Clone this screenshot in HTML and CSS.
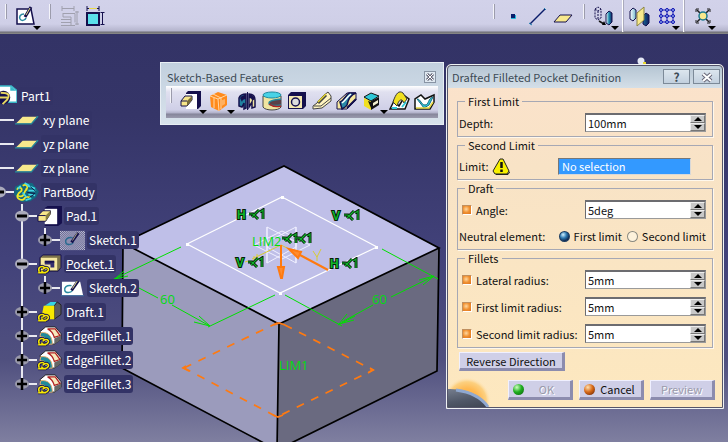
FILE: index.html
```html
<!DOCTYPE html>
<html lang="en">
<head>
<meta charset="utf-8">
<title>Part1</title>
<link rel="stylesheet" href="styles.css">
</head>
<body>
<svg class="defs" aria-hidden="true">
  <defs>
    <symbol id="i-pad" viewBox="0 0 22 22"><path d="M6 3l2-2h13v15l-3 3H6z" fill="#15104d"/><path d="M6 4h11v15H6z" fill="#fff"/><path d="M1 11l4-5h7v4l-5 6H1z" fill="#f7e68a" stroke="#15104d"/><path d="M7 11l5-5v4l-5 6z" fill="#776c38"/><path d="M1 11h6" stroke="#15104d"/></symbol>
    <symbol id="i-pad-wide" viewBox="0 0 26 24"><path d="M8 3l3-2h15v18l-4 3H8z" fill="#15104d"/><path d="M8 4h13v16H8z" fill="#fff"/><path d="M1 11l5-5h8v3l-5 8H1z" fill="#f7e68a" stroke="#15104d"/><path d="M9 11l5-5v4l-5 7z" fill="#8a8040"/><path d="M1 11h8" stroke="#15104d"/></symbol>
    <symbol id="i-pocket" viewBox="0 0 26 24"><path d="M3 5l3-3h19v13l-3 4H3z" fill="#7d744a" stroke="#15104d"/><path d="M4 5h17v13H4z" fill="#f7e9a0"/><path d="M8 9h10v6h-4v-3H8z" fill="#332d6e"/><path d="M8 9h10" stroke="#15104d" stroke-width="2"/></symbol>
    <symbol id="i-plane" viewBox="0 0 26 12"><path d="M9 2h15l-6 7H2z" fill="#f8e98c"/><path d="M1 9.500h17l7-8" fill="none" stroke="#258a9a" stroke-width="1.500"/></symbol>
    <symbol id="i-sketch" viewBox="0 0 26 20"><path d="M2 3h19l3 14H2z" fill="#fff"/><path d="M1 17.500h24" stroke="#3c6ea0"/><path d="M12 7c-5-1-8 2-7 5s6 3 8 0" fill="none" stroke="#2a8aa0" stroke-width="1.500"/><path d="M12 12l7-10" stroke="#15104d" stroke-width="3"/><path d="M13 10l5-8" stroke="#e8e08a"/></symbol>
    <pattern id="p-dither" width="2" height="2" patternUnits="userSpaceOnUse"><path d="M0 0h1v1H0zM1 1h1v1H1z" fill="#d8d8e4"/></pattern>
    <symbol id="i-sketch-hidden" viewBox="0 0 26 20"><path d="M0 0h26v20H0z" fill="url(#p-dither)"/><path d="M13 7c-5-1-8 2-7 5s6 3 8 0" fill="none" stroke="#2a6a90" stroke-width="1.500"/><path d="M12 12l7-10" stroke="#15104d" stroke-width="3"/><path d="M13 10l5-8" stroke="#a8a880"/></symbol>
    <symbol id="i-chain" viewBox="0 0 12 10"><path d="M2 7c-2-4 3-6 5-3M5 5c3-3 6-1 5 1S5 9 4 6M1 8h7" fill="none" stroke="#15104d" stroke-width="3"/><path d="M2 7c-2-4 3-6 5-3M5 5c3-3 6-1 5 1S5 9 4 6M1 8h7" fill="none" stroke="#f7e900" stroke-width="1.400"/></symbol>
    <symbol id="i-fillet" viewBox="0 0 26 24"><path d="M3 7l6-5h10l6 7v6l-7 5-9-1z" fill="#fff" stroke="#222"/><path d="M11 4h8l5 7-6 2c-1-4-3-7-7-9z" fill="#f6e9bd" stroke="#b02020" stroke-width="1.300"/><path d="M18 14l7-3v4l-7 5z" fill="#666"/><path d="M4 8c8-1 12 4 12 12h-4C11 15 8 12 3 12z" fill="#208a9a" stroke="#e8b070"/><use href="#i-chain" x="0" y="11" width="14" height="12"/></symbol>
    <symbol id="i-draft" viewBox="0 0 26 24"><path d="M8 5l6-4h8l-4 4z" fill="#35d5e5"/><path d="M21 1l4 3v10l-7 5V5z" fill="#5a5a60" stroke="#222"/><path d="M7 5h11v14H4z" fill="#f7e900"/><use href="#i-chain" x="0" y="11" width="14" height="12"/></symbol>
    <symbol id="i-plus" viewBox="0 0 14 14"><ellipse cx="7" cy="7" rx="7" ry="5" fill="#99a"/><path d="M2 7h10M7 1v12" stroke="#000" stroke-width="2.500"/></symbol>
    <symbol id="i-minus" viewBox="0 0 14 14"><ellipse cx="7" cy="7" rx="7" ry="5.500" fill="#aab"/><path d="M2 7h10" stroke="#000" stroke-width="3"/></symbol>
    <symbol id="i-coin" viewBox="-2 -1 18 14"><path d="M0 5h4l5 5M3 8l7-7M11 3l3-2v9" fill="none" stroke="#061c06" stroke-width="3"/><path d="M0 5h4l5 5M3 8l7-7M11 3l3-2v9" fill="none" stroke="#0fb52b" stroke-width="1.200"/></symbol>
    <linearGradient id="g-solid" x2="1"><stop stop-color="#fff"/><stop offset=".5" stop-color="#1f8fb0"/><stop offset="1" stop-color="#102060"/></linearGradient>
    <radialGradient id="g-sun"><stop offset=".5" stop-color="#ffb850"/><stop offset=".8" stop-color="#fcd080"/><stop offset="1" stop-color="#ffe8c0" stop-opacity="0"/></radialGradient>
    <linearGradient id="g-earth" x2=".3" y2="1"><stop stop-color="#8890a0"/><stop offset=".4" stop-color="#505868"/><stop offset="1" stop-color="#20242c"/></linearGradient>
  </defs>
</svg>

<header class="toolbar">
  <span class="grip"></span>
  <button class="tool drop" aria-label="Sketch"><svg viewBox="0 0 22 22"><path d="M2 4h14l3 15H2z" fill="#fff" stroke="#15104d" stroke-width="1.500"/><path d="M9 9c-4 0-5 3-4 5s5 2 6-1" fill="none" stroke="#2a8aa0" stroke-width="1.500"/><path d="M10 12l6-10" stroke="#15104d" stroke-width="3"/><path d="M11 10l4-7" stroke="#e8e08a"/></svg></button>
  <span class="grip"></span>
  <button class="tool" aria-label="Constraints dialog"><svg viewBox="0 0 22 22" fill="none" stroke="#a0a0ae"><path d="M3 1v5M15 1v5M3 3.500h12M4 8.500h12v9M4 8v4h8v8M2 14.500h10M2 17.500h10M2 20.500h14M18 6v14M16 7h4M16 19h4"/></svg></button>
  <button class="tool" aria-label="Constraint"><svg viewBox="0 0 22 22"><path d="M3 8h12v12H3z" fill="#5be0ea" stroke="#15104d" stroke-width="2"/><path d="M3 1v5M15 1v5M3 3.500h12" stroke="#15104d" fill="none"/><path d="M5 3.500h8" stroke="#e8d84a"/><path d="M18.500 7v13M16.500 7.500h4M16.500 19.500h4" stroke="#15104d"/></svg></button>
  <span class="spacer"></span>
  <span class="grip"></span>
  <button class="tool" aria-label="Point"><svg viewBox="0 0 22 22"><path d="M8 9h4v4H8z" fill="#0a1c6a"/><path d="M8 13.500h4.500V10" fill="none" stroke="#20b8d8"/></svg></button>
  <button class="tool" aria-label="Line"><svg viewBox="0 0 22 22"><path d="M2 19L17 4" stroke="#0a1c6a" stroke-width="1.500"/><path d="M1 18l3 2M16 3l2 2" stroke="#2080b0"/></svg></button>
  <button class="tool" aria-label="Plane"><svg viewBox="0 0 22 22"><path d="M7 10h12l-6 7H1z" fill="#f8e98c" stroke="#15104d"/></svg></button>
  <span class="grip"></span>
  <button class="tool drop" aria-label="Translation"><svg viewBox="0 0 22 22"><path d="M2 4l3-2 3 2v9l-3 2-3-2zM2 4l3 2 3-2M5 6v9" fill="none" stroke="#15104d" stroke-dasharray="2 1"/><path d="M6 16l5 3" stroke="#111" stroke-width="1.500"/><path d="M9 20l4 0-2-4z"/><path d="M13 9l3-3 3 2v9l-3 3-3-2z" fill="url(#g-solid)" stroke="#15104d"/></svg></button>
  <span class="rule"></span>
  <button class="tool" aria-label="Mirror"><svg viewBox="0 0 22 22"><path d="M1 6l3-3 3 2v8l-3 3-3-2zM14 11l3-3 3 2v8l-3 3-3-2z" fill="url(#g-solid)" stroke="#15104d"/><path d="M8 8l7-6v13l-7 6z" fill="#f8e98c" stroke="#8a8440"/></svg></button>
  <button class="tool drop" aria-label="Rectangular pattern"><svg viewBox="0 0 22 22"><path d="M7 3v16M13 3v16M19 3v16M5 5h16M5 11h16M5 17h16" stroke="#1414b4"/><g fill="#88a8e8" stroke="#1414b4"><circle cx="7" cy="5" r="1.500"/><circle cx="13" cy="5" r="1.500"/><circle cx="19" cy="5" r="1.500"/><circle cx="7" cy="11" r="1.500"/><circle cx="13" cy="11" r="1.500"/><circle cx="19" cy="11" r="1.500"/><circle cx="7" cy="17" r="1.500"/><circle cx="13" cy="17" r="1.500"/><circle cx="19" cy="17" r="1.500"/></g></svg></button>
  <span class="rule"></span>
  <button class="tool drop" aria-label="Scaling"><svg viewBox="0 0 22 22"><path d="M7 5l12 12M19 5L7 17" stroke="#222" stroke-width="1.500"/><path d="M6 7V4h3M17 4h3v3M6 15v3h3M17 18h3v-3" fill="none" stroke="#222"/><circle cx="13" cy="11" r="4" fill="#f8e98c" stroke="#1c7a90" stroke-width="1.500"/></svg></button>
</header>

<main class="workspace">
  <svg class="scene" viewBox="0 34 728 408" preserveAspectRatio="xMinYMin meet" role="img" aria-label="Part geometry">
    <path d="M123 243L279 324L277 450L122 368z" fill="#9b9bbc"/>
    <path d="M279 324L439 248L437 371L277 450z" fill="#6a6a80"/>
    <path d="M284 166L439 248L279 324L123 243z" fill="#bfbfe8"/>
    <path d="M123 243L284 166L439 248L279 324zM123 243L122 368L277 450L437 371L439 248M279 324L277 450" class="edge"/>
    <path d="M282 197L377 247L280 293L187 244z" class="profile"/>
    <path d="M267 227l29 15v21l-29-16zM296 227l-29 15v21l29-16zM254 245l28-14 28 14-28 14zM267 227v36M296 227v36" class="axes"/>
    <path d="M281 196h3v3h-3zM375 246h3v3h-3zM279 292h3v3h-3zM186 243h3v3h-3z" fill="#fff"/>
    <path d="M281 245L252 259M248 261l-3 1M254 256l0 5M257 254l0 4M281 245l10 5M313 251l4 6 4-8M317 257v4" class="axis"/>
    <g class="dim">
      <path d="M181 247L114 279M115 279l13-3M115 279l9-8M139 288L158 298M172 305L208 325M210 326L194 322M210 326L199 316M208 327L275 295M285 295L342 326M373 305L342 322M338 325L355 316M339 324L347 314M339 324L354 320M391 297L432 277M434 276L419 280M434 276L423 285M382 249L438 279"/>
    </g>
    <g class="measure">
      <text x="160" y="304">60</text><text x="372" y="304">60</text>
      <text x="252" y="246">LIM2</text><text x="279" y="370">LIM1</text>
    </g>
    <path d="M184 368L279 322L373 370L277 417z" class="limit"/>
    <path d="M274 325l5-2 6 2M273 415l5 2 5-2M186 366l-3 2 6 3M370 368l3 2-5 3" class="limit-tip"/>
    <path d="M281 245V270M328 270L300 255" class="arrow"/>
    <path d="M278 267h6l-2 11h-1zM289 249l12 3-3 6z" class="arrow-head"/>
    <g class="hv">
      <text x="237" y="219">H</text><text x="332" y="220">V</text><text x="236" y="267">V</text><text x="330" y="268">H</text>
    </g>
    <use href="#i-coin" x="247" y="208" width="18" height="14"/>
    <use href="#i-coin" x="342" y="209" width="18" height="14"/>
    <use href="#i-coin" x="246" y="256" width="18" height="14"/>
    <use href="#i-coin" x="340" y="257" width="18" height="14"/>
    <use href="#i-coin" x="280" y="232" width="18" height="14"/>
    <use href="#i-coin" x="294" y="232" width="18" height="14"/>
    <circle cx="641" cy="61" r="3.500" fill="#e4e8f4"/><path d="M643 62h3v2h-3z" fill="#e8d830"/>
  </svg>

  <nav class="tree" aria-label="Specification tree">
    <div class="row root"><svg class="icon" viewBox="0 0 26 24"><path d="M4 1h16l6 5v12H4z" fill="#fff" stroke="#38b8c8" stroke-width="1.500"/><path d="M19 1v5h6z" fill="#38b8c8"/><circle cx="12" cy="13" r="7" fill="#15104d"/><path d="M9 8c8 0 10 2 7 7l-5 5M8 13h8" stroke="#e8d860" stroke-width="2" fill="none"/></svg><span class="label">Part1</span></div>
    <ul class="branch">
      <li><div class="row"><span class="lead"></span><svg class="icon"><use href="#i-plane"/></svg><span class="label">xy plane</span></div></li>
      <li><div class="row"><span class="lead"></span><svg class="icon"><use href="#i-plane"/></svg><span class="label">yz plane</span></div></li>
      <li><div class="row"><span class="lead"></span><svg class="icon"><use href="#i-plane"/></svg><span class="label">zx plane</span></div></li>
      <li><div class="row"><svg class="knob"><use href="#i-minus"/></svg><svg class="icon" viewBox="0 0 26 24"><path d="M0 14L1 6 9 2l10 0 3 4 4 5-3 6-6 4-9 1-5-4z" fill="#126a82"/><path d="M3 9c3-5 7 0 4 2s-5 5 0 5 3-8 7-7M9 5c4-3 7 2 3 4M4 14c-3 4 5 8 7 4s5 1 6-2" fill="none" stroke="#f2e628" stroke-width="1.800"/><path d="M14 5l8 3M15 10h8M15 14l7 1M11 2l5 3M7 5l-3 3M12 20l6-2M9 12l4 5" stroke="#43d9e6" stroke-width="1.800"/><path d="M17 6l6 5M14 12l8 1M16 17l5-3" stroke="#101040"/></svg><span class="label">PartBody</span></div>
        <ul class="branch lined">
          <li><div class="row"><svg class="knob"><use href="#i-minus"/></svg><svg class="icon"><use href="#i-pad-wide"/></svg><span class="label">Pad.1</span></div>
            <ul class="branch stub"><li><div class="row"><svg class="knob"><use href="#i-plus"/></svg><svg class="icon"><use href="#i-sketch-hidden"/></svg><span class="label">Sketch.1</span></div></li></ul></li>
          <li><div class="row"><svg class="knob"><use href="#i-minus"/></svg><svg class="icon" viewBox="0 0 26 24"><use href="#i-pocket"/><use href="#i-chain" x="0" y="11" width="14" height="12"/></svg><span class="label current">Pocket.1</span></div>
            <ul class="branch stub"><li><div class="row"><svg class="knob"><use href="#i-plus"/></svg><svg class="icon"><use href="#i-sketch"/></svg><span class="label">Sketch.2</span></div></li></ul></li>
          <li><div class="row"><svg class="knob"><use href="#i-plus"/></svg><svg class="icon"><use href="#i-draft"/></svg><span class="label">Draft.1</span></div></li>
          <li><div class="row"><svg class="knob"><use href="#i-plus"/></svg><svg class="icon"><use href="#i-fillet"/></svg><span class="label">EdgeFillet.1</span></div></li>
          <li><div class="row"><svg class="knob"><use href="#i-plus"/></svg><svg class="icon"><use href="#i-fillet"/></svg><span class="label">EdgeFillet.2</span></div></li>
          <li><div class="row"><svg class="knob"><use href="#i-plus"/></svg><svg class="icon"><use href="#i-fillet"/></svg><span class="label">EdgeFillet.3</span></div></li>
        </ul></li>
    </ul>
  </nav>

  <section class="palette" aria-label="Sketch-Based Features">
    <div class="caption"><h2>Sketch-Based Features</h2><button class="close" aria-label="Close palette"><svg viewBox="0 0 10 10"><path d="M2 2l6 6M8 2L2 8" stroke="#667" stroke-width="3"/><path d="M2 2l6 6M8 2L2 8" stroke="#fff"/></svg></button></div>
    <div class="palette-bar">
      <span class="grip"></span>
      <button class="tool drop" aria-label="Pad"><svg><use href="#i-pad"/></svg></button>
      <button class="tool drop" aria-label="Pocket"><svg viewBox="0 0 22 22"><path d="M2 6l8-4 9 3v10l-8 6-8-4z" fill="#ff8a1c"/><path d="M2 6l8 3 9-4M10 9l1 12M5 4l8 4v11M6 8v10" fill="none" stroke="#ffd8a8"/><path d="M12 11l5-2v5l-5 3z" fill="#ffb060"/></svg></button>
      <button class="tool" aria-label="Shaft"><svg viewBox="0 0 22 22"><path d="M3 8c1-3 4-4 7-4v14l-2 1v-6l-2 4-3-1z" fill="#2080a0" stroke="#15104d" stroke-width="1.500"/><path d="M13 4c4 0 6 2 6 6v7l-3 1v-6l-3 5z" fill="#f0e4a0" stroke="#15104d" stroke-width="1.500"/><path d="M4 8c2-3 4-3 6-3v4c-2 0-4 1-4 3M13 4c3 0 5 2 6 5l-3 2c0-2-1-3-3-3z" fill="#15104d"/><path d="M11.500 2v18" stroke="#15104d"/></svg></button>
      <button class="tool" aria-label="Groove"><svg viewBox="0 0 22 22"><path d="M2 6v11c2 4 16 4 18 0V6z" fill="#f0e4a0" stroke="#444"/><path d="M20 9c-5 1-12 1-12 4s6 3 12 2" fill="#5a4048" stroke="#208aa0" stroke-width="1.500"/><path d="M8 14c4 3 8 3 12 2" stroke="#b02020" fill="none" stroke-width="1.500"/><ellipse cx="11" cy="5" rx="9" ry="3" fill="#48d2e6" stroke="#208aa0"/></svg></button>
      <button class="tool" aria-label="Hole"><svg viewBox="0 0 22 22"><path d="M2 5l3-3h15v14l-3 3H2z" fill="#15104d"/><path d="M3 6h13v12H3z" fill="#f4e8b0"/><circle cx="9.500" cy="12" r="4" fill="#ddd" stroke="#15104d" stroke-width="1.500"/></svg></button>
      <button class="tool" aria-label="Rib"><svg viewBox="0 0 22 22"><path d="M2 16l4-3 6-7 5-4 3 4v5l-9 7-9 1z" fill="#fff4c0" stroke="#444"/><path d="M3 16h7l10-8" fill="none" stroke="#444"/><path d="M7 13l8-8" stroke="#444" stroke-width="3"/><path d="M7 12l8-8" stroke="#e8d830" stroke-width="1.500"/></svg></button>
      <button class="tool" aria-label="Slot"><svg viewBox="0 0 22 22"><path d="M1 12l10-9h9v7l-9 9H1z" fill="#f7e9a0" stroke="#15104d"/><path d="M4 12c4-1 5-6 9-9h7c-6 2-8 7-9 12-1 2-3 3-5 4z" fill="#2a8aa8" stroke="#15104d" stroke-width="1.500"/><path d="M6 13c3-2 5-6 9-9" stroke="#fff" stroke-width="1.500" fill="none"/><path d="M11 18l9-9" stroke="#15104d" stroke-width="2"/></svg></button>
      <button class="tool drop" aria-label="Stiffener"><svg viewBox="0 0 22 22"><path d="M3 8l7 3v9l-7-4z" fill="#f0e020"/><path d="M10 11l8-4v8l-8 5z" fill="#111"/><path d="M3 7l7-4 8 3-8 5z" fill="#30c8d8" stroke="#111"/><path d="M7 11l3 1v6z" fill="#111"/><path d="M12 13l5-3v3l-5 3z" fill="#f4f0d0"/></svg></button>
      <button class="tool" aria-label="Multi-sections solid"><svg viewBox="0 0 22 22"><path d="M1 19l4-8 5 5 6-10 4 3-4 10z" fill="#fff" stroke="#111" stroke-width="1.500"/><path d="M4 12c3-9 6-12 10-9l4 6-3 4c-2-5-5-4-7 3z" fill="#f0e020" stroke="#333"/><path d="M3 18h5M13 17l4-5" stroke="#30c8d8" stroke-width="2"/></svg></button>
      <button class="tool" aria-label="Removed multi-sections solid"><svg viewBox="0 0 22 22"><path d="M1 19V9l6-4 4 4 9-4v7l-4 7z" fill="#fff" stroke="#111" stroke-width="1.500"/><path d="M3 9c4 0 4 6 8 6s3-7 8-8l-4 8-5 3z" fill="#30c8d8" stroke="#186a80"/><path d="M2 18h13l4-6" stroke="#e8d840" stroke-width="1.500" fill="none"/></svg></button>
    </div>
  </section>

  <form class="dialog" aria-labelledby="dlg-title">
    <div class="titlebar">
      <h2 id="dlg-title">Drafted Filleted Pocket Definition</h2>
      <button type="button" class="win" aria-label="Help">?</button>
      <button type="button" class="win" aria-label="Close"><svg viewBox="0 0 12 12"><path d="M2 3l8 7M10 3L2 10" stroke="#667" stroke-width="4"/><path d="M2 3l8 7M10 3L2 10" stroke="#fff" stroke-width="2"/></svg></button>
    </div>
    <div class="body">
      <fieldset><legend>First Limit</legend>
        <div class="field"><label for="depth">Depth:</label><span class="spin"><input id="depth" type="text" value="100mm"><span class="steps"><button type="button" aria-label="Increase depth"></button><button type="button" aria-label="Decrease depth"></button></span></span></div>
      </fieldset>
      <fieldset><legend>Second Limit</legend>
        <div class="field"><label for="limit">Limit:</label><svg class="warn" viewBox="0 0 18 18"><path d="M8 2h3l6 12-2 3H3l-2-3z" fill="#f8f000" stroke="#222"/><path d="M4 17.500h12l2-3" fill="none" stroke="#222"/><path d="M9.500 5v6M9.500 12.500v2.500" stroke="#111" stroke-width="2.500"/></svg><input id="limit" class="selection" type="text" value="No selection" readonly></div>
      </fieldset>
      <fieldset><legend>Draft</legend>
        <div class="field"><input type="checkbox" id="c-angle" checked><label for="c-angle">Angle:</label><span class="spin"><input type="text" value="5deg" aria-label="Angle"><span class="steps"><button type="button" aria-label="Increase angle"></button><button type="button" aria-label="Decrease angle"></button></span></span></div>
        <div class="field"><span class="neutral">Neutral element:</span><input type="radio" name="neutral" id="n1" checked><label for="n1">First limit</label><input type="radio" name="neutral" id="n2"><label for="n2">Second limit</label></div>
      </fieldset>
      <fieldset><legend>Fillets</legend>
        <div class="field"><input type="checkbox" id="c-lat" checked><label for="c-lat">Lateral radius:</label><span class="spin"><input type="text" value="5mm" aria-label="Lateral radius"><span class="steps"><button type="button" aria-label="Increase lateral radius"></button><button type="button" aria-label="Decrease lateral radius"></button></span></span></div>
        <div class="field"><input type="checkbox" id="c-first" checked><label for="c-first">First limit radius:</label><span class="spin"><input type="text" value="5mm" aria-label="First limit radius"><span class="steps"><button type="button" aria-label="Increase first limit radius"></button><button type="button" aria-label="Decrease first limit radius"></button></span></span></div>
        <div class="field"><input type="checkbox" id="c-second" checked><label for="c-second">Second limit radius:</label><span class="spin"><input type="text" value="5mm" aria-label="Second limit radius"><span class="steps"><button type="button" aria-label="Increase second limit radius"></button><button type="button" aria-label="Decrease second limit radius"></button></span></span></div>
      </fieldset>
      <button type="button" class="push reverse">Reverse Direction</button>
      <div class="actions">
        <button type="submit" class="push action" disabled><span class="ball green"></span><span>OK</span></button>
        <button type="button" class="push action"><span class="ball orange"></span><span>Cancel</span></button>
        <button type="button" class="push action" disabled>Preview</button>
      </div>
    </div>
    <svg class="sunrise" viewBox="0 0 44 31" aria-hidden="true"><circle cx="19" cy="25" r="24" fill="url(#g-sun)"/><ellipse cx="2" cy="37" rx="39" ry="24" fill="url(#g-earth)"/><path d="M8 14c14 2 26 8 32 17" fill="none" stroke="#8fa8d0" stroke-width="3"/></svg>
  </form>
</main>
</body>
</html>
```
FILE: styles.css
```css
* { box-sizing: border-box; }

body {
  margin: 0;
  min-height: 100vh;
  display: flex;
  flex-direction: column;
  overflow-x: hidden;
  font: 11px/14px "Noto Sans CJK KR", "Noto Sans", sans-serif;
  color: #111;
}

button, input { font: inherit; color: inherit; }
button { padding: 0; border: 0; background: none; }
h2 { margin: 0; font: inherit; }
.defs { position: absolute; width: 0; height: 0; }

/* Toolbars */
.toolbar {
  display: flex;
  align-items: center;
  gap: 3px;
  height: 34px;
  padding: 2px 12px 4px 0;
  background: linear-gradient(#d2d2ea 0, #cfcfe7 24px, #b4b4cc 31px, #6f6f77 32px, #8c8c88 34px);
}

.grip {
  width: 2px;
  height: 15px;
  margin: 2px 5px 0;
  align-self: flex-start;
  background: linear-gradient(90deg, #f4f4fa 50%, #9c9cac 50%);
}

.rule { width: 2px; align-self: stretch; margin: -2px 2px -2px 0; background: linear-gradient(90deg, #fff 50%, #aaaabc 50%); }
.spacer { flex: 1; }
.tool { position: relative; flex: none; width: 22px; height: 22px; }
.toolbar .drop { width: 26px; }
.tool svg { display: block; width: 22px; height: 22px; }

.drop::after {
  content: "";
  position: absolute;
  right: 0;
  bottom: -3px;
  border: solid transparent;
  border-width: 4px 4px 0;
  border-top-color: #000;
}

.palette .drop::after { right: -5px; bottom: -2px; }

/* Workspace */
.workspace {
  position: relative;
  flex: 1;
  overflow: hidden;
  background: linear-gradient(#333366 0, #353568 20%, #42427a 55%, #50507f 80%, #7f7fa0 100%);
}

.scene { position: absolute; inset: 0; width: 100%; height: 100%; }
.edge { fill: none; stroke: #000; stroke-width: 1.7; }
.profile { fill: none; stroke: #fff; stroke-width: 1.2; }
.axes { fill: none; stroke: #f0f0ff; stroke-width: 1; }
.axis { fill: none; stroke: #d8cc30; }
.dim { fill: none; stroke: #00e000; }
.measure { fill: #00dc10; font: 13px "Open Sans", sans-serif; }
.limit { fill: none; stroke: #ff7a10; stroke-width: 1.7; stroke-dasharray: 8 8; }
.limit-tip { fill: none; stroke: #ff7a10; stroke-width: 1.7; }
.arrow { stroke: #ff7a10; stroke-width: 2; }
.arrow-head { fill: #ff8c30; stroke: #ff7a10; stroke-width: 2; }
.hv { fill: #0fb52b; stroke: #061c06; stroke-width: 2; paint-order: stroke; font: bold 12px "Liberation Sans", sans-serif; }

/* Specification tree */
.tree {
  position: relative;
  width: 150px;
  margin-left: -8px;
  padding-top: 50px;
  font-size: 12px;
  line-height: 18px;
  color: #fff;
}

.branch { margin: 0; padding: 0; list-style: none; }
.branch .branch { padding-left: 23px; }
.lined { background: linear-gradient(#e8e8f0, #e8e8f0) 29px 0 / 2px calc(100% - 12px) no-repeat; }
.stub { background: linear-gradient(#e8e8f0, #e8e8f0) 29px 0 / 2px 12px no-repeat; }
.row { display: flex; align-items: center; height: 24px; }
.row:not(.root) { background: linear-gradient(#e8e8f0, #e8e8f0) 12px 11px / 10px 2px no-repeat; }
.knob { flex: none; width: 14px; height: 14px; }
.lead { width: 14px; height: 2px; background: #e8e8f0; }
.knob + .icon, .lead + .icon { margin-left: 8px; }
.icon { flex: none; width: 25px; height: 23px; }
.label { margin-left: 2px; padding: 0 2px; border-radius: 3px; background: #333366; white-space: nowrap; }
.current { text-decoration: underline; }

/* Floating palette */
.palette {
  position: absolute;
  left: 160px;
  top: 28px;
  width: 284px;
  padding: 5px 5px 6px;
  border: 1px solid #e8eef4;
  background: linear-gradient(#c2d0de, #d8e2ec);
}

.caption { display: flex; align-items: center; justify-content: space-between; height: 18px; padding: 0 2px 0 1px; color: #3c4a55; }
.close { width: 12px; height: 12px; border: 1px solid #8894a4; background: #dfe8f0; }
.close svg { display: block; width: 10px; height: 10px; }

.palette-bar {
  display: flex;
  align-items: center;
  gap: 3px;
  height: 32px;
  padding-bottom: 2px;
  background: linear-gradient(#fff 0, #e0e0f0 6px, #cfcfe7 24px, #b0b0c8 27px, #85859a 28px, #9a9aae 32px);
}

.palette-bar .grip { margin-left: 4px; }
.palette-bar .drop { margin-right: 3px; }

/* Definition dialog */
.dialog {
  position: absolute;
  left: 446px;
  top: 30px;
  width: 278px;
  border: 1px solid #eef2f4;
  outline: 1px solid #55556a;
  outline-offset: -2px;
  border-radius: 5px 5px 0 0;
  background: linear-gradient(#fbe2cc, #f8e3c6 30%, #fde8bf);
}

.titlebar {
  display: flex;
  align-items: center;
  gap: 3px;
  height: 23px;
  padding: 0 3px 0 5px;
  border-radius: 5px 5px 0 0;
  background: linear-gradient(#b4c4d2, #d4dfe8);
  color: #3c4a55;
}

.titlebar h2 { flex: 1; white-space: nowrap; }
.win { width: 27px; height: 15px; border: 1px solid #7c8a98; background: linear-gradient(#dce6ee, #c2d0de); font-size: 12px; font-weight: bold; line-height: 13px; }
.win svg { display: block; width: 12px; height: 12px; margin: 0 auto; }
.body { position: relative; z-index: 1; padding: 7px 10px 8px; }

fieldset {
  min-width: 0;
  margin: 0 0 2px;
  padding: 6px 6px 4px 1px;
  border: 1px solid #a6a8b4;
  box-shadow: 1px 1px 0 #fff8ec;
}

legend { height: 12px; margin-left: 6px; padding: 0 3px; line-height: 12px; }
.field { display: flex; align-items: center; min-height: 18px; }
.field + .field { margin-top: 8px; }
.field label { white-space: nowrap; }

.spin { display: flex; width: 121px; height: 19px; margin-left: auto; border: 1px solid #9a9a9a; border-top: 2px solid #6c6c70; border-left-color: #6c6c70; background: #fff; }
.spin input { flex: 1; min-width: 0; height: 16px; padding: 0 0 0 2px; border: 0; background: none; line-height: 16px; }
.steps { display: flex; flex-direction: column; width: 15px; }
.steps button { display: grid; place-items: center; flex: 1; min-height: 0; border: 1px solid #777; border-top-color: #eee; border-left-color: #eee; background: #c8c8c8; }
.steps button::before { content: ""; border: solid transparent; border-width: 0 4px 4px; border-bottom-color: #000; }
.steps button:last-child::before { border-width: 4px 4px 0; border-top-color: #000; }

.selection { width: 133px; height: 17px; margin-left: auto; margin-right: 15px; padding: 0 0 0 3px; border: 1px solid #d8d8d8; border-top-color: #777; border-left-color: #777; background: #3399ff; color: #fff; }
.warn { width: 18px; height: 18px; margin-left: 3px; }

input[type="checkbox"] { appearance: none; width: 10px; height: 10px; margin: 0 4px 0 3px; border: 1px solid #c09060; border-right-color: #fff; border-bottom-color: #fff; background: radial-gradient(circle at 40% 40%, #ffd8a0, #f09030 50%, #d87020); }
input[type="radio"] { appearance: none; width: 11px; height: 11px; margin: 0 4px 0 0; border: 1px solid #8a8a80; border-radius: 50%; background: #fdf2dc; }
input[type="radio"]:checked { border-color: #1c3c60; background: radial-gradient(circle at 35% 30%, #d0f0ff, #2c78b0 40%, #102850 75%); }
.neutral { width: 101px; }
#n2 { margin-left: 5px; }

.push { border: solid; border-width: 1px 3px 3px 1px; border-color: #f0f0ff #8c8cae #8c8cae #f0f0ff; background: #cfcfe7; }
.push:disabled { color: #9a9aaa; text-shadow: 1px 1px 0 #fff; }
.reverse { display: block; width: 106px; height: 19px; margin: 4px 0 0 2px; }
.actions { display: flex; justify-content: flex-end; gap: 6px; margin: 9px -2px 0 0; }
.action { position: relative; display: flex; align-items: center; justify-content: center; width: 65px; height: 20px; }
.action .ball + span { margin-left: 14px; }
.ball { position: absolute; left: 4px; width: 11px; height: 11px; border-radius: 50%; }
.green { background: radial-gradient(circle at 35% 30%, #d0ffc0, #20b020 45%, #0a5a0a); }
.orange { background: radial-gradient(circle at 35% 30%, #ffe0b0, #d86a18 45%, #5a1c04); }
.sunrise { position: absolute; left: 1px; bottom: 1px; width: 44px; height: 31px; }
```
